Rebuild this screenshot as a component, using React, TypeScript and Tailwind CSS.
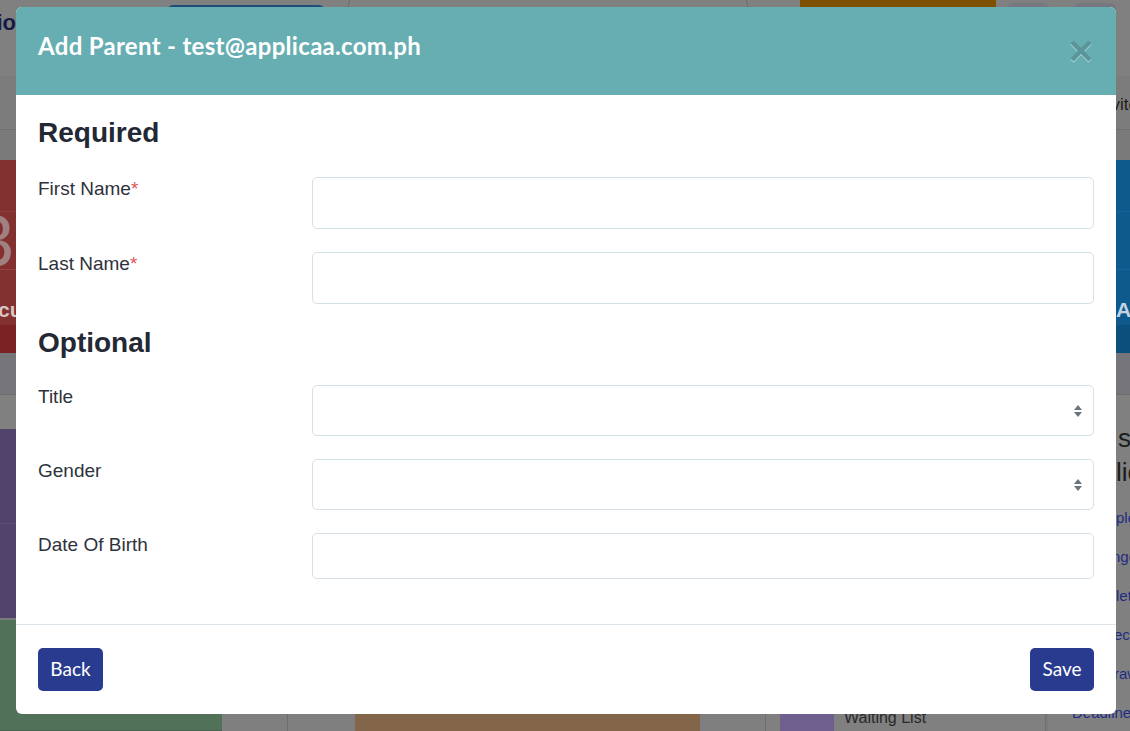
import React from "react";

const sans = "font-['Liberation_Sans',Arial,sans-serif]";
const lato = "font-['Lato','Open_Sans',sans-serif]";

function SelectArrows() {
  return (
    <svg width="10" height="14" viewBox="0 0 10 14" className="shrink-0">
      <path d="M5 1 L9 6 L1 6 Z" fill="#6c757d" />
      <path d="M1 8 L9 8 L5 13 Z" fill="#6c757d" />
    </svg>
  );
}

function Row({
  label,
  required,
  kind,
  height,
}: {
  label: string;
  required?: boolean;
  kind: "text" | "select";
  height: string;
}) {
  return (
    <div className="mb-[23px] grid grid-cols-[274px_1fr] items-start">
      <label className={`${sans} pt-[2px] text-[19px] leading-[20px] text-[#2e323b]`}>
        {label}
        {required && <span className="text-[#e0565b]">*</span>}
      </label>
      <div
        className={`flex ${height} items-center justify-end rounded-[5px] border border-[#d5dfe6] bg-white pr-[10px]`}
      >
        {kind === "select" && <SelectArrows />}
      </div>
    </div>
  );
}

function Backdrop() {
  return (
    <div className={`${sans} flex h-[731px] w-[1130px] flex-col overflow-hidden bg-[#7a7a7a]`}>
      {/* top bar */}
      <div className="flex h-[76px] shrink-0 items-start bg-[#808080]">
        <div className="flex w-[16px] shrink-0 justify-end pt-[6px]">
          <span className="whitespace-nowrap text-[22px] font-bold text-[#141b42]">Applicaa Portfolio</span>
        </div>
        <div className="ml-[151px] mt-[5px] h-[40px] w-[158px] rounded-[6px] border-2 border-[#1f4d78]" />
        <div className="ml-[23px] mt-[-12px] h-[50px] w-[400px] rounded-[18px] border border-[#6e6e6e]" />
        <div className="ml-[52px] mt-[-12px] h-[50px] w-[196px] rounded-[6px] bg-[#7f4f00]" />
        <div className="ml-[11px] mt-[3px] h-[42px] w-[42px] rounded-[6px] bg-[#77777f]" />
        <div className="ml-[25px] mt-[3px] h-[42px] w-[42px] rounded-[6px] bg-[#77777f]" />
      </div>
      {/* nav row */}
      <div className="flex h-[54px] shrink-0 items-end justify-end border-b border-[#6f6f6f] bg-[#7c7c7c] pb-[12px]">
        <span className="mr-[-8px] whitespace-nowrap text-[17px] text-[#1c1c1c]">Invite</span>
      </div>
      <div className="h-[30px] shrink-0" />
      {/* stat cards */}
      <div className="flex h-[193px] shrink-0 justify-between">
        <div className="flex w-[260px] flex-col bg-[#833030]">
          <div className="h-[52px] border-b border-[#8c3c3c]" />
          <div className="flex h-[58px] items-center justify-end overflow-hidden border-b border-[#934545]">
            <span className="mr-[246px] text-[72px] leading-none text-[#a08080]">3</span>
          </div>
          <div className="flex h-[55px] items-end pb-[0px]">
            <span className="ml-[-30px] whitespace-nowrap text-[21px] font-bold text-[#d8c4c4]">Documents</span>
          </div>
          <div className="flex-1 bg-[#7a2124]" />
        </div>
        <div className="flex w-[260px] flex-col bg-[#0e5a8c]">
          <div className="h-[52px] border-b border-[#16639a]" />
          <div className="h-[58px] border-b border-[#16639a]" />
          <div className="flex h-[55px] items-end pb-[0px]">
            <span className="ml-[246px] whitespace-nowrap text-[21px] font-bold text-[#c4d4e4]">Awaiting</span>
          </div>
          <div className="flex-1 bg-[#0b4f7d]" />
        </div>
      </div>
      <div className="h-[42px] shrink-0 border-b border-[#6f6f6f] bg-[#75757a]" />
      {/* lower section */}
      <div className="flex flex-1">
        <div className="flex w-[222px] flex-col">
          <div className="h-[34px] bg-[#808080]" />
          <div className="h-[95px] border-b border-[#5d4f78] bg-[#52436d]" />
          <div className="h-[94px] bg-[#52436d]" />
          <div className="h-[2px] bg-[#7a7a7a]" />
          <div className="flex-1 border-b border-[#48634f] bg-[#527159]" />
        </div>
        <div className="flex flex-1 flex-col justify-end">
          <div className="flex h-[26px]">
            <div className="w-[66px] border-r border-[#6f6f6f] bg-[#7f7f7f]" />
            <div className="w-[67px] bg-[#7f7f7f]" />
            <div className="w-[345px] bg-[#836649]" />
            <div className="w-[66px] border-r border-[#6f6f6f] bg-[#7f7f7f]" />
            <div className="flex w-[280px] items-center gap-[10px] border-r border-[#6f6f6f] bg-[#808080] pl-[14px]">
              <div className="h-[26px] w-[54px] bg-[#6e5f8e]" />
              <span className="text-[16px] text-[#2a2a2a]">Waiting List</span>
            </div>
          </div>
        </div>
        <div className="flex w-[82px] flex-col bg-[#808080] pl-[24px] pt-[26px]">
          <div className="ml-[46px] whitespace-nowrap text-[26px] leading-[34px] text-[#1c1c1c]">sions</div>
          <div className="ml-[44px] whitespace-nowrap text-[26px] leading-[34px] text-[#1c1c1c]">lications</div>
          <div className="mt-[19px] flex flex-col gap-[20px] text-[15px] leading-[19px] text-[#1e2d82]">
            <span className="ml-[44px] whitespace-nowrap">plete</span>
            <span className="ml-[40px] whitespace-nowrap">ngoing</span>
            <span className="ml-[44px] whitespace-nowrap">leted</span>
            <span className="ml-[42px] whitespace-nowrap">ecent</span>
            <span className="ml-[42px] whitespace-nowrap">rawn</span>
            <span className="whitespace-nowrap">Deadlines</span>
          </div>
        </div>
      </div>
    </div>
  );
}

export default function App() {
  return (
    <div className="relative h-[731px] w-[1130px] overflow-hidden">
      <Backdrop />
      <div className="absolute left-[16px] top-[7px] flex h-[707px] w-[1100px] flex-col overflow-hidden rounded-[6px] bg-white">
        <div className="flex h-[88px] shrink-0 items-start justify-between bg-[#67aeb2] pl-[22px] pr-[24px] pt-[22px]">
          <h2 className={`${lato} text-[24px] font-bold leading-[33px] tracking-[0.3px] text-white`}>
            Add Parent - test@applicaa.com.ph
          </h2>
          <button className="mt-[11px]" aria-label="Close">
            <svg width="22" height="23" viewBox="0 0 22 23">
              <g stroke="#ffffff" strokeOpacity="0.55" strokeWidth="4.5" strokeLinecap="butt">
                <line x1="2" y1="3" x2="20" y2="21" />
                <line x1="20" y1="3" x2="2" y2="21" />
              </g>
              <g stroke="#5a9599" strokeWidth="4.5" strokeLinecap="butt">
                <line x1="2" y1="2" x2="20" y2="20" />
                <line x1="20" y1="2" x2="2" y2="20" />
              </g>
            </svg>
          </button>
        </div>
        <div className="flex-1 px-[22px] pt-[22px]">
          <h3 className={`${sans} mb-[28px] text-[28px] font-bold leading-[32px] text-[#232834]`}>Required</h3>
          <Row label="First Name" required kind="text" height="h-[52px]" />
          <Row label="Last Name" required kind="text" height="h-[52px]" />
          <h3 className={`${sans} mb-[26px] text-[28px] font-bold leading-[32px] text-[#232834]`}>Optional</h3>
          <Row label="Title" kind="select" height="h-[51px]" />
          <Row label="Gender" kind="select" height="h-[51px]" />
          <Row label="Date Of Birth" kind="text" height="h-[46px]" />
        </div>
        <div className="flex h-[90px] shrink-0 items-center justify-between border-t border-[#dde5ea] px-[22px]">
          <button className={`${lato} h-[43px] w-[65px] rounded-[5px] bg-[#283b8f] text-[19px] text-white`}>
            Back
          </button>
          <button className={`${lato} h-[43px] w-[64px] rounded-[5px] bg-[#283b8f] text-[19px] text-white`}>
            Save
          </button>
        </div>
      </div>
    </div>
  );
}
